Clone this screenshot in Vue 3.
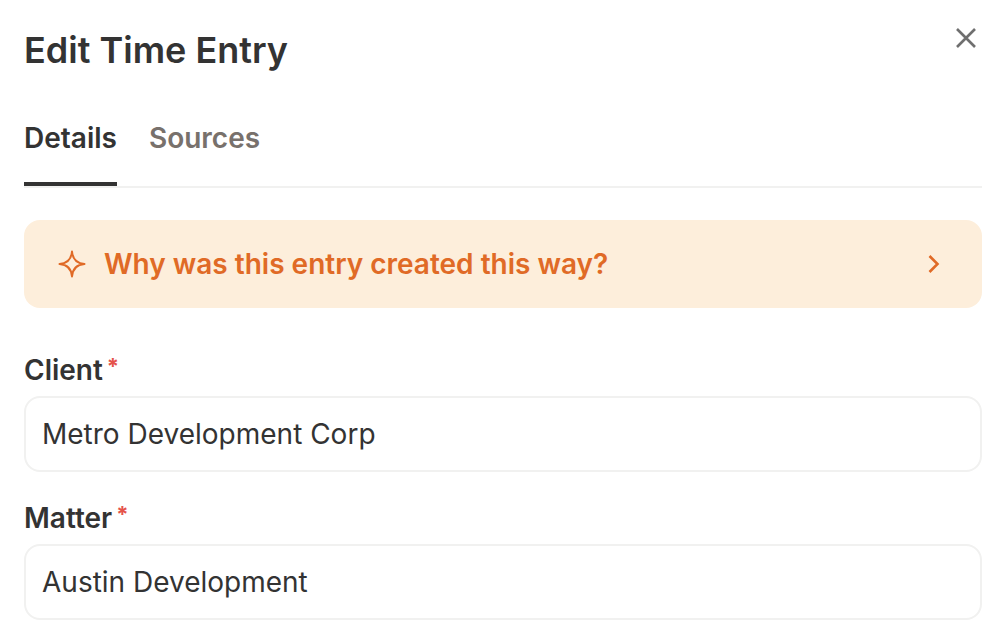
<script setup>
const fields = [
  { label: 'Client', value: 'Metro Development Corp' },
  { label: 'Matter', value: 'Austin Development' }
]
</script>

<template>
  <div class="panel">
    <header class="head">
      <h1>Edit Time Entry</h1>
      <button type="button" class="close" aria-label="Close">
        <svg width="24" height="24" viewBox="0 0 24 24" fill="none" stroke="#6f6f6f" stroke-width="2.6">
          <path d="M3 3 21 21M21 3 3 21" />
        </svg>
      </button>
    </header>

    <nav class="tabs">
      <span class="tab active">Details</span>
      <span class="tab">Sources</span>
    </nav>

    <div class="why">
      <svg class="spark" width="28" height="28" viewBox="0 0 28 28" fill="none" stroke="#e06a26" stroke-width="2">
        <path d="M14 1.5C14.6 9 19 13.4 26.5 14 19 14.6 14.6 19 14 26.5 13.4 19 9 14.6 1.5 14 9 13.4 13.4 9 14 1.5Z" stroke-linejoin="round" />
      </svg>
      <span class="why-text">Why was this entry created this way?</span>
      <svg class="chev" width="14" height="20" viewBox="0 0 14 20" fill="none" stroke="#e06a26" stroke-width="2.6">
        <path d="M1.5 2 9.5 10 1.5 18" />
      </svg>
    </div>

    <div v-for="f in fields" :key="f.label" class="field">
      <label>{{ f.label }}<span class="req">*</span></label>
      <div class="input">{{ f.value }}</div>
    </div>
  </div>
</template>

<style>
html, body {
  background: #fff;
  overflow: hidden;
}
</style>

<style scoped>
.panel {
  width: 1004px;
  height: 640px;
  box-sizing: border-box;
  padding: 28px 22px 0 24px;
  font-family: Inter, "Liberation Sans", sans-serif;
  color: #333;
  overflow: hidden;
}
.head {
  display: flex;
  justify-content: space-between;
  align-items: flex-start;
  height: 44px;
}
h1 {
  margin: 0;
  font-size: 36px;
  line-height: 44px;
  font-weight: 600;
}
.close {
  border: 0;
  padding: 0;
  background: none;
  margin: -2px 4px 0 0;
  height: 24px;
}
.tabs {
  display: flex;
  gap: 32px;
  margin-top: 44px;
  border-bottom: 2px solid #f1f1f0;
}
.tab {
  font-size: 28px;
  line-height: 44px;
  font-weight: 600;
  color: #78716c;
  height: 70px;
  box-sizing: border-box;
}
.tab.active {
  color: #333;
  border-bottom: 4px solid #333;
}
.why {
  display: flex;
  align-items: center;
  height: 88px;
  margin-top: 32px;
  padding: 0 40px 0 34px;
  background: #fdeedb;
  border-radius: 16px;
}
.spark {
  flex: none;
}
.why-text {
  flex: 1;
  margin-left: 18px;
  font-size: 28px;
  font-weight: 600;
  color: #e06a26;
}
.chev {
  flex: none;
}
.field {
  margin-top: 36px;
}
.field + .field {
  margin-top: 20px;
}
label {
  display: block;
  font-size: 28px;
  line-height: 44px;
  font-weight: 600;
}
.req {
  color: #e5534b;
  font-size: 22px;
  font-weight: 700;
  margin-left: 4px;
  vertical-align: 6px;
}
.input {
  height: 76px;
  box-sizing: border-box;
  margin-top: 4px;
  padding: 0 16px;
  border: 2px solid #f1f1f0;
  border-radius: 16px;
  font-size: 28px;
  line-height: 72px;
  font-weight: 400;
}
</style>
